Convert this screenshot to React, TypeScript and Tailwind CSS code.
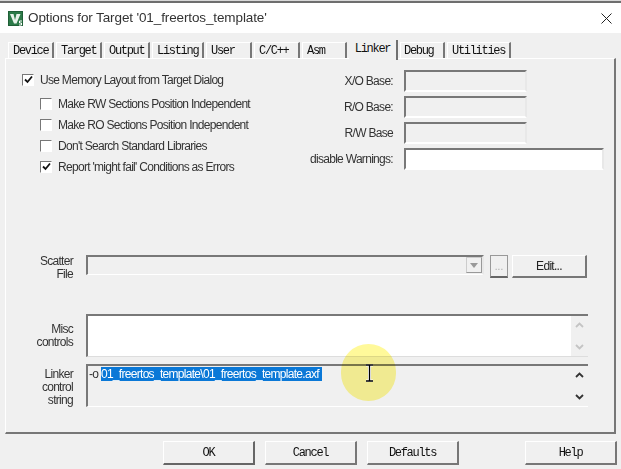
const sans = { fontFamily: '"Liberation Sans", Arial, sans-serif' };

const tabs = [
  ['Device', 46],
  ['Target', 46],
  ['Output', 46],
  ['Listing', 52],
  ['User', 46],
  ['C/C++', 46],
  ['Asm', 45],
];

function WVIcon() {
  return (
    <svg width="15" height="15" viewBox="0 0 15 15" className="shrink-0">
      <rect x="0" y="0" width="15" height="15" fill="#2c7a48" />
      <rect x="0.500" y="0.500" width="14" height="14" fill="none" stroke="#1f5f37" />
      <path d="M2 3 H5.500 L7 9 L8.500 3 H12.500 L8.500 12.500 H6 Z" fill="#e8f2ea" />
      <path d="M14 10 h-2.500 v2 h2 v2 h-2.500" fill="none" stroke="#ffffff" strokeWidth="1" />
    </svg>
  );
}

function Tab({ label, width, active, pad }: { label: string; width: number; active?: boolean; pad?: boolean }) {
  if (active) {
    return (
      <div className="relative z-10 flex h-[20px] w-[49px] shrink-0 items-start justify-center border-r-2 border-[#6f6f6f] bg-[#f0f0f0] font-['Liberation_Mono'] text-[12px] tracking-[-1.3px] text-[#111]">
        {label}
      </div>
    );
  }
  return (
    <div
      style={{ width }}
      className={`mt-[2px] flex h-[16px] shrink-0 items-center border-t border-l border-t-white border-l-white border-r-2 border-r-[#777] font-['Liberation_Mono'] text-[12px] tracking-[-1.3px] text-[#111] ${pad ? 'pl-[3px]' : 'pl-[4px]'}`}
    >
      {label}
    </div>
  );
}

function Check({ checked, label }: { checked?: boolean; label: string }) {
  return (
    <div className="flex h-[21px] items-center gap-[6px]">
      <div className="flex h-[12px] w-[12px] items-center justify-center border border-[#777] border-r-white border-b-white bg-white">
        {checked && (
          <svg width="9" height="9" viewBox="0 0 9 9">
            <path d="M1 4.500 L3.500 7 L8 1.500" fill="none" stroke="#111" strokeWidth="1.800" />
          </svg>
        )}
      </div>
      <span className="text-[12px] tracking-[-0.7px] text-[#333]">{label}</span>
    </div>
  );
}

function Field({ label, wide, gap }: { label: string; wide?: boolean; gap: string }) {
  return (
    <div className={`flex items-center ${gap}`}>
      <span className="w-[93px] text-right text-[12px] tracking-[-0.7px] text-[#333] whitespace-nowrap">{label}</span>
      <div className={`ml-[11px] h-[22px] border-2 border-[#787878] border-r-[#e8e8e8] border-b-white ${wide ? 'w-[200px] bg-white' : 'w-[123px] bg-[#f0f0f0]'}`} />
    </div>
  );
}

function ScrollArrows({ muted }: { muted?: boolean }) {
  const color = muted ? '#c4c4c4' : '#333';
  return (
    <div className="flex h-full w-[17px] shrink-0 flex-col items-center justify-between bg-[#f0f0f0] py-[6px]">
      <svg width="9" height="6" viewBox="0 0 9 6">
        <path d="M1 5 L4.500 1.500 L8 5" fill="none" stroke={color} strokeWidth="1.800" />
      </svg>
      <svg width="9" height="6" viewBox="0 0 9 6">
        <path d="M1 1 L4.500 4.500 L8 1" fill="none" stroke={color} strokeWidth="1.800" />
      </svg>
    </div>
  );
}

function RowLabel({ lines, pad }: { lines: string[]; pad: string }) {
  return (
    <div className={`w-[61px] shrink-0 text-right text-[12px] leading-[13px] tracking-[-0.7px] text-[#333] ${pad}`}>
      {lines.map((l) => (
        <div key={l}>{l}</div>
      ))}
    </div>
  );
}

function DlgButton({ label, heavy }: { label: string; heavy?: boolean }) {
  return (
    <div
      className={`flex h-[24px] w-[92px] items-center justify-center border border-l-white border-t-white border-b-2 border-r-2 font-['Liberation_Mono'] text-[12px] tracking-[-1.3px] text-[#111] ${
        heavy ? 'border-[#666] border-l-[#777] border-t-[#777]' : 'border-[#777]'
      }`}
    >
      {label}
    </div>
  );
}

export default function App() {
  return (
    <div style={sans} className="relative h-[469px] w-[621px] overflow-hidden bg-[#f0f0f0]">
      {/* Title bar */}
      <div className="h-[3px] border-b-2 border-[#6e6e6e] bg-[#d8d8d8]" />
      <div className="flex h-[30px] items-center bg-white pl-[8px] pr-[9px]">
        <WVIcon />
        <span className="ml-[5px] text-[13.5px] tracking-[-0.12px] text-[#333]">Options for Target '01_freertos_template'</span>
        <svg width="11" height="11" viewBox="0 0 11 11" className="ml-auto">
          <path d="M0.500 0.500 L10.500 10.500 M10.500 0.500 L0.500 10.500" stroke="#222" strokeWidth="1" />
        </svg>
      </div>

      {/* Tabs */}
      <div className="ml-[8px] mt-[7px] flex h-[18px] items-start gap-[2px]">
        {tabs.map(([label, width]) => (
          <Tab key={label as string} label={label as string} width={width as number} />
        ))}
        <Tab label="Linker" width={49} active />
        <Tab label="Debug" width={45} pad />
        <Tab label="Utilities" width={64} />
      </div>

      {/* Panel */}
      <div className="mx-[5px] h-[376px] border-t border-l border-white border-r-2 border-b-2 border-r-[#777] border-b-[#777] px-[16px]">
        <div className="flex justify-between pt-[10px]">
          <div>
            <Check checked label="Use Memory Layout from Target Dialog" />
            <div className="ml-[18px] mt-[3px]">
              <Check label="Make RW Sections Position Independent" />
              <Check label="Make RO Sections Position Independent" />
              <Check label="Don't Search Standard Libraries" />
              <Check checked label="Report 'might fail' Conditions as Errors" />
            </div>
          </div>
          <div className="-mr-[6px] flex flex-col pt-[1px]">
            <Field label="X/O Base:" gap="mb-[4px]" />
            <Field label="R/O Base:" gap="mb-[4px]" />
            <Field label="R/W Base" gap="mb-[4px]" />
            <Field label="disable Warnings:" wide gap="" />
          </div>
        </div>

        {/* Scatter */}
        <div className="-ml-[10px] mt-[78px] flex items-start">
          <RowLabel lines={['Scatter', 'File']} pad="" />
          <div className="ml-[13px] flex h-[20px] w-[398px] justify-end border-2 border-b border-[#787878] border-r-[#e8e8e8] border-b-white">
            <div className="flex h-[16px] w-[16px] items-center justify-center border border-[#ccc] border-r-[#999] border-b-[#999]">
              <div className="h-0 w-0 border-x-[4px] border-t-[5px] border-x-transparent border-t-[#999]" />
            </div>
          </div>
          <div className="ml-[6px] flex h-[23px] w-[18px] items-center justify-center border border-[#999] border-b-2 border-b-[#666] text-[10px] text-[#aaa]">...</div>
          <div className="ml-[4px] flex h-[23px] w-[75px] items-center justify-center border border-l-white border-t-white border-r-2 border-b-2 border-[#777] text-[12px] tracking-[-0.7px] text-[#222]">
            Edit...
          </div>
        </div>

        {/* Misc */}
        <div className="-ml-[10px] mt-[33px] flex items-start">
          <RowLabel lines={['Misc', 'controls']} pad="pt-[9px]" />
          <div className="ml-[13px] flex h-[43px] w-[502px] justify-end border-t-2 border-l-2 border-t-[#787878] border-l-[#787878] border-b border-b-[#ddd] bg-white">
            <ScrollArrows muted />
          </div>
        </div>

        {/* Linker */}
        <div className="-ml-[10px] mt-[7px] flex items-start">
          <RowLabel lines={['Linker', 'control', 'string']} pad="pt-[4px]" />
          <div className="ml-[13px] flex h-[43px] w-[502px] border-t-2 border-l-2 border-t-[#787878] border-l-[#787878] border-b border-b-white">
            <div className="flex-1 pl-[1px] pt-[2px] text-[12px] leading-[13px] tracking-[-0.7px] text-[#333] whitespace-pre">
              -o <span className="bg-[#0a78d7] text-white">01_freertos_template\01_freertos_template.axf </span>
            </div>
            <ScrollArrows />
          </div>
        </div>
      </div>

      {/* Bottom buttons */}
      <div className="ml-[163px] mt-[7px] flex">
        <DlgButton label="OK" heavy />
        <div className="ml-[10px]">
          <DlgButton label="Cancel" />
        </div>
        <div className="ml-[10px]">
          <DlgButton label="Defaults" />
        </div>
        <div className="ml-[66px]">
          <DlgButton label="Help" />
        </div>
      </div>

      {/* Mouse highlight */}
      <div className="absolute left-[341px] top-[344px] h-[57px] w-[55px] rounded-full bg-[#fff99a] mix-blend-multiply" />
      <svg width="9" height="18" viewBox="0 0 9 18" className="absolute left-[365px] top-[364px]">
        <path d="M1 1 H8 M1 17 H8 M4.500 1 V17" stroke="#fff" strokeWidth="3" fill="none" />
        <path d="M1 1 H8 M1 17 H8 M4.500 1 V17" stroke="#000" strokeWidth="1.300" fill="none" />
      </svg>
    </div>
  );
}
